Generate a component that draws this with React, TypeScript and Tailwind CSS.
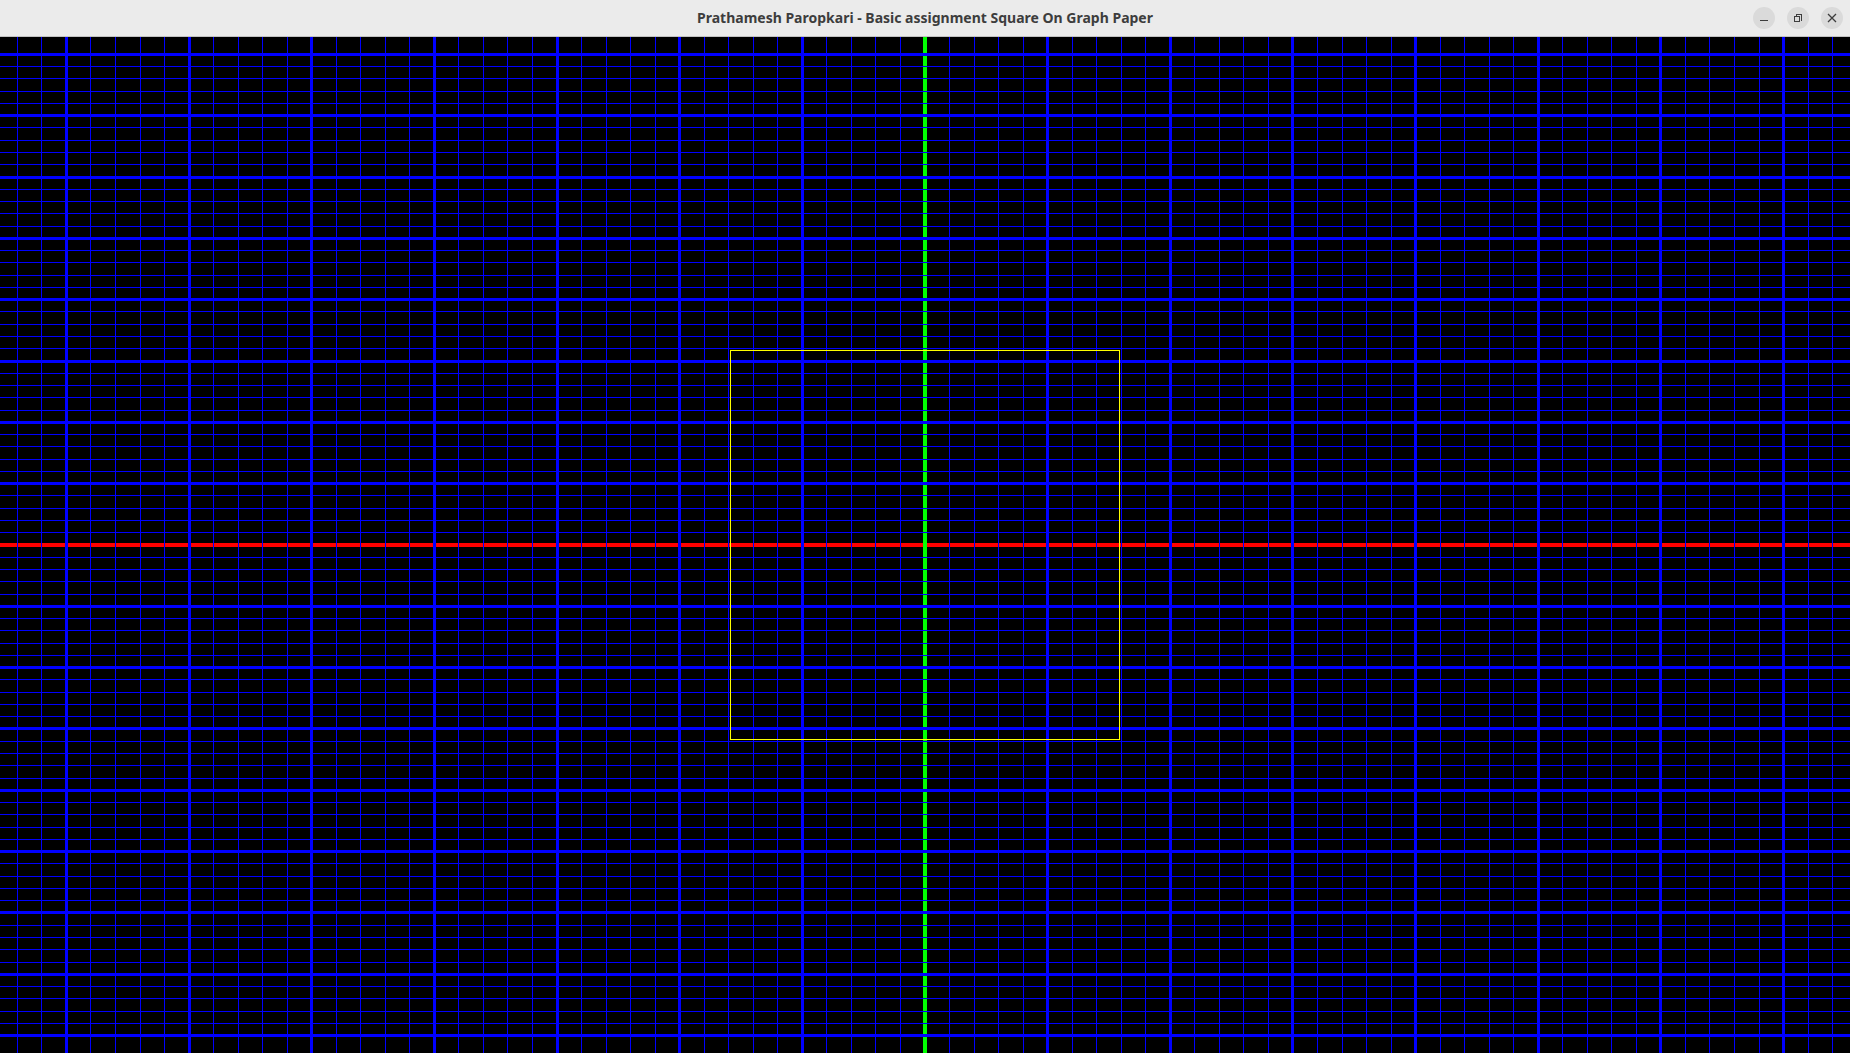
import React from "react";

const W = 1850;
const H = 1016;
const CX = 925;
const CY = 508;
const DX = 24.53;
const DY = 12.265;

function GraphPaper() {
  const ks: number[] = [];
  for (let k = -40; k <= 40; k++) if (k !== 0) ks.push(k);
  return (
    <svg width={W} height={H} viewBox={`0 0 ${W} ${H}`} shapeRendering="crispEdges" className="block">
      <rect x={0} y={0} width={W} height={H} fill="#000000" />
      {/* x axis */}
      <line x1={0} x2={W} y1={CY} y2={CY} stroke="#ff0000" strokeWidth={4} />
      {/* y axis */}
      <line x1={CX} x2={CX} y1={0} y2={H} stroke="#00ff00" strokeWidth={4} />
      {ks.map((k) => {
        const y = Math.floor(CY + k * DY) + 0.5;
        return (
          <line
            key={"h" + k}
            x1={0}
            x2={W}
            y1={y}
            y2={y}
            stroke="#0000ff"
            strokeWidth={k % 5 === 0 ? 3 : 1}
          />
        );
      })}
      {ks.map((k) => {
        const x = Math.floor(CX + k * DX) + 0.5;
        if (x < -5 || x > W + 5) return null;
        return (
          <line
            key={"v" + k}
            x1={x}
            x2={x}
            y1={0}
            y2={H}
            stroke="#0000ff"
            strokeWidth={k % 5 === 0 ? 3 : 1}
          />
        );
      })}
      <rect x={730.5} y={313.5} width={389} height={389} fill="none" stroke="#ffff00" strokeWidth={1} />
    </svg>
  );
}

function WinButton({ children }: { children: React.ReactNode }) {
  return (
    <div className="w-[22px] h-[22px] rounded-full bg-[#dadada] flex items-center justify-center">
      {children}
    </div>
  );
}

export default function App() {
  return (
    <div className="w-[1850px] h-[1053px] flex flex-col overflow-hidden bg-black">
      <div className="h-[37px] shrink-0 bg-[#ebebeb] border-b border-[#c2c2c2] flex items-center relative">
        <div className="flex-1 flex justify-center">
          <span
            className="text-[14px] font-bold text-[#3d3d3d] leading-none"
            style={{ fontFamily: '"Noto Sans", "DejaVu Sans", sans-serif' }}
          >
            Prathamesh Paropkari - Basic assignment Square On Graph Paper
          </span>
        </div>
        <div className="absolute right-[7px] top-[7px] flex gap-[12px]">
          <WinButton>
            <svg width="22" height="22" viewBox="0 0 22 22">
              <rect x="7" y="13" width="8" height="1" fill="#3d3d3d" />
            </svg>
          </WinButton>
          <WinButton>
            <svg width="22" height="22" viewBox="0 0 22 22" shapeRendering="crispEdges">
              <path d="M9 8.5 V7.5 H14.5 V13 H13.5" fill="none" stroke="#3d3d3d" strokeWidth="1" />
              <rect x="7.5" y="9.5" width="5" height="5" fill="none" stroke="#3d3d3d" strokeWidth="1" />
            </svg>
          </WinButton>
          <WinButton>
            <svg width="22" height="22" viewBox="0 0 22 22">
              <path d="M7 7 L15 15 M15 7 L7 15" stroke="#3d3d3d" strokeWidth="1.3" />
            </svg>
          </WinButton>
        </div>
      </div>
      <div className="flex-1">
        <GraphPaper />
      </div>
    </div>
  );
}
